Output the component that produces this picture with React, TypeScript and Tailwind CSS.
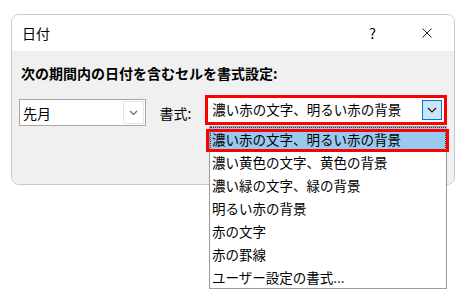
const items = [
  '濃い赤の文字、明るい赤の背景',
  '濃い黄色の文字、黄色の背景',
  '濃い緑の文字、緑の背景',
  '明るい赤の背景',
  '赤の文字',
  '赤の罫線',
  'ユーザー設定の書式...',
]

function Chevron({ className, width }: { className: string; width: number }) {
  return (
    <svg width={width + 2} height={width / 2 + 2} viewBox={`-1 -1 ${width + 2} ${width / 2 + 2}`} className={className} fill="none">
      <polyline points={`0,0 ${width / 2},${width / 2} ${width},0`} stroke="currentColor" strokeWidth="1.2" />
    </svg>
  )
}

export default function App() {
  return (
    <div className="relative w-[466px] h-[306px] bg-white pl-[11px] pt-[14px] text-black font-['Noto_Sans_CJK_JP',sans-serif]">
      {/* ── dialog ── */}
      <div className="w-[444px] h-[171px] flex flex-col rounded-[8px] border border-[#c3cad3] overflow-hidden">
        <div className="h-[36px] shrink-0 bg-white flex items-center pl-[10px] pr-[22px]">
          <span className="text-[14px] leading-none">日付</span>
          <span className="ml-auto text-[14px] leading-none mr-[46px]">?</span>
          <svg width="10" height="10" viewBox="0 0 10 10" className="text-[#222]">
            <path d="M0.5 0.5 L9.5 9.5 M9.5 0.5 L0.5 9.5" stroke="currentColor" strokeWidth="1" />
          </svg>
        </div>

        <div className="flex-1 bg-[#f0f0f0] px-[7px] pt-[12px]">
          <div className="ml-[2px] h-[20px] flex items-center text-[14px] font-bold leading-none">
            次の期間内の日付を含むセルを書式設定:
          </div>

          <div className="flex items-start mt-[12px]">
            {/* period combo */}
            <div className="mt-[4px] w-[128px] h-[27px] bg-white border border-[#a8a8a8] flex items-center pl-[3px] pr-[1px]">
              <span className="text-[14px] leading-none">先月</span>
              <div className="ml-auto w-[21px] h-[23px] border border-[#e6e6e6] bg-white flex items-center justify-center">
                <Chevron className="text-[#707070]" width={7} />
              </div>
            </div>

            <div className="ml-[13px] mt-[4px] w-[46px] h-[27px] flex items-center text-[14px] leading-none">
              書式:
            </div>

            {/* format combo (highlighted with red frame) */}
            <div className="w-[243px] h-[30px] border-[3px] border-[#ff0000] bg-white flex items-center pl-[4px] pr-[2px]">
              <span className="text-[13.5px] leading-none">濃い赤の文字、明るい赤の背景</span>
              <div className="ml-auto w-[20px] h-[20px] bg-[#cce4f7] border border-[#0078d7] flex items-center justify-center">
                <Chevron className="text-[#1a1a1a]" width={8} />
              </div>
            </div>
          </div>
        </div>
      </div>

      {/* ── open drop-down list ── */}
      <div className="absolute left-[209px] top-[126px] w-[238px] border border-[#9a9a9a] bg-white">
        {items.map((t, i) => (
          <div
            key={t}
            className={
              i === 0
                ? 'h-[23px] flex items-center pl-[1px] pt-[2px] bg-[#99c9ef] border border-dotted border-[#333]'
                : 'h-[23px] flex items-center pl-[2px] pt-[2px]'
            }
          >
            <span className="text-[13.5px] leading-none">{t}</span>
          </div>
        ))}
      </div>

      {/* red frame around selected item */}
      <div className="absolute left-[206px] top-[129px] w-[243px] h-[23px] border-[3px] border-[#ff0000]" />
    </div>
  )
}
